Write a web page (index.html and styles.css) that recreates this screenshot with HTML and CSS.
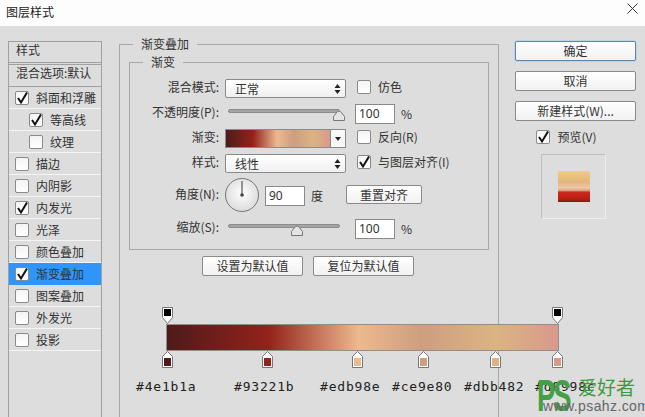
FILE: index.html
```html
<!DOCTYPE html>
<html lang="zh-CN">
<head>
	<meta charset="UTF-8">
	<title>图层样式</title>
	<link rel="stylesheet" href="styles.css">
</head>
<body>
	<svg class="defs" width="0" height="0">
		<symbol id="tick" viewBox="0 0 14 14"><path d="M3 7l3 4.500L12 1.500" fill="none" stroke="#111" stroke-width="2"/></symbol>
		<symbol id="stop-top" viewBox="0 0 11 17"><path d="M.5.5h10v10l-5 6-5-6z" fill="#fff" stroke="#777"/><rect x="2" y="2" width="7" height="7" fill="#000"/></symbol>
		<symbol id="stop-bottom" viewBox="0 0 11 17"><path d="M.5 16.500h10v-11l-5-5-5 5z" fill="#fff" stroke="#777"/><rect x="2" y="7" width="7" height="8" fill="currentColor"/></symbol>
		<symbol id="updown" viewBox="0 0 7 10"><path d="M3.500 0l3 4h-6zM3.500 10l3-4h-6z" fill="#222"/></symbol>
		<symbol id="thumb" viewBox="0 0 12 11"><path d="M.5 10.500v-4l4-5q1.500-1 3 0l4 5v4z" fill="#e4e4e4" stroke="#777"/></symbol>
	</svg>

	<div class="titlebar">
		<span>图层样式</span>
		<svg class="close" width="11" height="11" viewBox="0 0 11 11"><path d="M.5.5l10 10M10.500.5l-10 10" stroke="#333" fill="none"/></svg>
	</div>

	<div class="main">
		<div class="side">
			<div class="side-head">样式</div>
			<div class="side-blend">混合选项:默认</div>
			<div class="side-row"><span class="check"><svg><use href="#tick"/></svg></span>斜面和浮雕</div>
			<div class="side-row sub"><span class="check"><svg><use href="#tick"/></svg></span>等高线</div>
			<div class="side-row sub"><span class="check"></span>纹理</div>
			<div class="side-row"><span class="check"></span>描边</div>
			<div class="side-row"><span class="check"></span>内阴影</div>
			<div class="side-row"><span class="check"><svg><use href="#tick"/></svg></span>内发光</div>
			<div class="side-row"><span class="check"></span>光泽</div>
			<div class="side-row"><span class="check"></span>颜色叠加</div>
			<div class="side-row active"><span class="check"><svg><use href="#tick"/></svg></span>渐变叠加</div>
			<div class="side-row"><span class="check"></span>图案叠加</div>
			<div class="side-row"><span class="check"></span>外发光</div>
			<div class="side-row"><span class="check"></span>投影</div>
		</div>

		<fieldset class="outer">
			<legend>渐变叠加</legend>
			<fieldset class="inner">
				<legend>渐变</legend>
				<div class="form">
					<div class="row">
						<label>混合模式:</label>
						<div class="select">正常<svg class="updown"><use href="#updown"/></svg></div>
						<span class="opt"><span class="check"></span>仿色</span>
					</div>
					<div class="row">
						<label>不透明度(P):</label>
						<div class="slider"><svg class="thumb thumb-end"><use href="#thumb"/></svg></div>
						<div class="num">100</div><span class="unit">%</span>
					</div>
					<div class="row">
						<label>渐变:</label>
						<div class="grad-pick"><div class="grad-swatch"></div><div class="grad-arrow"></div></div>
						<span class="opt"><span class="check"></span>反向(R)</span>
					</div>
					<div class="row">
						<label>样式:</label>
						<div class="select">线性<svg class="updown"><use href="#updown"/></svg></div>
						<span class="opt"><span class="check"><svg><use href="#tick"/></svg></span>与图层对齐(I)</span>
					</div>
					<div class="row">
						<label>角度(N):</label>
						<svg class="dial" width="34" height="34" viewBox="0 0 34 34">
							<defs><radialGradient id="dialbg" cx=".5" cy=".45" r=".6"><stop offset="0" stop-color="#fff"/><stop offset="1" stop-color="#d8d8d8"/></radialGradient></defs>
							<circle cx="17" cy="17" r="16.500" fill="url(#dialbg)" stroke="#777"/>
							<path d="M17 3v14" stroke="#555" stroke-width="1.200"/>
							<circle cx="17" cy="17" r="1.800" fill="#444"/>
						</svg>
						<div class="num">90</div><span class="unit deg">度</span>
						<button class="btn btn-reset">重置对齐</button>
					</div>
					<div class="row">
						<label>缩放(S):</label>
						<div class="slider"><svg class="thumb thumb-mid"><use href="#thumb"/></svg></div>
						<div class="num">100</div><span class="unit">%</span>
					</div>
				</div>
			</fieldset>

			<div class="defaults">
				<button class="btn">设置为默认值</button>
				<button class="btn">复位为默认值</button>
			</div>

			<div class="bar-wrap">
				<svg class="stop-t left-end"><use href="#stop-top"/></svg>
				<svg class="stop-t right-end"><use href="#stop-top"/></svg>
				<div class="bar"></div>
				<svg class="stop-b" style="left:1px;color:#4e1b1a"><use href="#stop-bottom"/></svg>
				<svg class="stop-b" style="left:101px;color:#93221b"><use href="#stop-bottom"/></svg>
				<svg class="stop-b" style="left:191px;color:#edb98e"><use href="#stop-bottom"/></svg>
				<svg class="stop-b" style="left:257px;color:#ce9e80"><use href="#stop-bottom"/></svg>
				<svg class="stop-b" style="left:329px;color:#dbb482"><use href="#stop-bottom"/></svg>
				<svg class="stop-b" style="left:391px;color:#d8998c"><use href="#stop-bottom"/></svg>
				<span class="hex" style="left:1px">#4e1b1a</span>
				<span class="hex" style="left:99px">#93221b</span>
				<span class="hex" style="left:185px">#edb98e</span>
				<span class="hex" style="left:257px">#ce9e80</span>
				<span class="hex" style="left:329px">#dbb482</span>
				<span class="hex" style="left:400px">#d8998c</span>
			</div>
		</fieldset>

		<div class="actions">
			<button class="btn big primary">确定</button>
			<button class="btn big">取消</button>
			<button class="btn big">新建样式(W)...</button>
			<span class="opt preview-opt"><span class="check"><svg><use href="#tick"/></svg></span>预览(V)</span>
			<div class="preview"><div class="preview-swatch"></div></div>
		</div>
	</div>

	<div class="watermark">
		<span class="wm-ps">PS</span>
		<span class="wm-name">爱好者</span>
		<span class="wm-url">www.psahz.com</span>
	</div>
</body>
</html>
```

FILE: styles.css
```css
*{
	margin:0;
	padding:0;
	box-sizing:border-box;
}
html,body{
	height:100%;
	overflow:hidden;
}
body{
	position:relative;
	background:#dddddd;
	color:#333;
	font:12px/16px "Noto Sans CJK SC","Liberation Sans",sans-serif;
}
.defs{
	position:absolute;
}
.titlebar{
	height:26px;
	background:#fdfdfd;
	padding:3px 0 0 6px;
	font-size:12px;
	line-height:18px;
	color:#222;
	display:flex;
	justify-content:space-between;
}
.close{
	margin:0 7px 0 0;
}
.main{
	display:flex;
	align-items:flex-start;
	height:391px;
	padding:15px 0 0 8px;
}

/* left list */
.side{
	width:94px;
	height:376px;
	border:1px solid #a0a0a0;
	border-bottom:0;
	flex:none;
}
.side-head{
	height:23px;
	padding:0 0 0 7px;
	border-bottom:3px double #a0a0a0;
}
.side-blend{
	height:22px;
	padding:0 0 0 7px;
	border-bottom:1px solid #a0a0a0;
}
.side-row{
	height:22px;
	display:flex;
	align-items:center;
	padding-left:6px;
	gap:7px;
	border-bottom:1px solid #f5f5f5;
}
.side-row.sub{
	padding-left:20px;
}
.side-row.active{
	background:#2f95fb;
	border-bottom-color:#2f95fb;
}
.check{
	width:14px;
	height:14px;
	flex:none;
	border:1px solid #8a8a8a;
	border-radius:2px;
	background:linear-gradient(#f4f4f4,#fff);
	display:inline-block;
}
.check svg{
	display:block;
	width:14px;
	height:14px;
	margin:-1px 0 0 -1px;
}

/* middle */
.outer{
	width:380px;
	height:400px;
	margin:-4px 0 0 17px;
	border:0;
	border-left:1px solid #a8a8a8;
	border-right:1px solid #a8a8a8;
	border-top:1px solid #a8a8a8;
	padding:0 9px;
	flex:none;
	position:relative;
}
.outer > legend{
	margin-left:4px;
	padding:0 8px;
	line-height:14px;
}
.inner{
	width:360px;
	height:195px;
	margin-top:4px;
	border:1px solid #a8a8a8;
	padding:0;
}
.inner > legend{
	margin-left:13px;
	padding:0 8px;
	line-height:14px;
}
.form{
	display:grid;
	grid-template-rows:repeat(3,25px) 32px 33px 20px;
	padding-top:10px;
}
.row{
	display:flex;
	align-items:flex-start;
	height:20px;
}
.row label{
	width:89px;
	text-align:right;
	margin-right:6px;
	flex:none;
	white-space:nowrap;
}
.select{
	width:121px;
	height:19px;
	border:1px solid #8a8a8a;
	border-radius:2px;
	background:linear-gradient(#fff,#f0f0f0);
	padding-left:9px;
	line-height:17px;
	position:relative;
	flex:none;
}
.updown{
	position:absolute;
	right:4px;
	top:4px;
	width:7px;
	height:10px;
}
.opt{
	display:inline-flex;
	align-items:center;
	gap:7px;
	margin-left:11px;
	white-space:nowrap;
}
.slider{
	width:112px;
	height:4px;
	margin:5px 15px 0 3px;
	background:#a4a4a4;
	border:1px solid #8c8c8c;
	border-radius:2px;
	position:relative;
	flex:none;
}
.thumb{
	position:absolute;
	top:0;
	width:12px;
	height:11px;
}
.thumb-end{
	right:-6px;
}
.thumb-mid{
	left:62px;
}
.num{
	width:40px;
	height:20px;
	border:1px solid #8a8a8a;
	background:#fff;
	padding-left:3px;
	line-height:18px;
	font-family:"Noto Sans","Liberation Sans",sans-serif;
	flex:none;
}
.unit{
	margin-left:6px;
	line-height:20px;
}
.grad-pick{
	width:121px;
	height:19px;
	border:1px solid #8a8a8a;
	display:flex;
	flex:none;
}
.grad-swatch{
	flex:1;
	background:linear-gradient(90deg,#4e1b1a 0,#93221b 26%,#edb98e 49%,#ce9e80 65%,#dbb482 84%,#d8998c 100%);
	border-right:1px solid #8a8a8a;
}
.grad-arrow{
	width:14px;
	background:#f8f8f8;
	position:relative;
}
.grad-arrow::after{
	content:"";
	position:absolute;
	left:4px;
	top:7px;
	border:3px solid transparent;
	border-top:4px solid #222;
	border-bottom:0;
}
.dial{
	margin:-8px 6px 0 0;
	flex:none;
}
.deg{
	margin-left:6px;
}
.btn{
	font:12px/16px "Noto Sans CJK SC","Liberation Sans",sans-serif;
	color:#333;
	border:1px solid #8a8a8a;
	border-radius:2px;
	background:linear-gradient(#fff,#f1f1f1);
	white-space:nowrap;
}
.btn-reset{
	width:76px;
	height:19px;
	margin:-1px 0 0 23px;
}
.defaults{
	display:flex;
	gap:10px;
	margin:6px 0 0 73px;
}
.defaults .btn{
	width:101px;
	height:20px;
}

/* gradient bar */
.bar-wrap{
	position:absolute;
	left:46px;
	top:256px;
	width:393px;
}
.bar{
	height:27px;
	margin-top:17px;
	border:1px solid #8f8f8f;
	background:linear-gradient(90deg,#4e1b1a 0,#93221b 26%,#edb98e 49%,#ce9e80 65%,#dbb482 84%,#d8998c 100%);
}
.stop-t,.stop-b{
	position:absolute;
	width:11px;
	height:17px;
	overflow:visible;
}
.stop-t{
	top:0;
}
.left-end{
	left:-4px;
}
.right-end{
	left:386px;
}
.stop-b{
	top:44px;
	margin-left:-5px;
}
.hex{
	position:absolute;
	top:71px;
	margin-left:-31px;
	font:13px/18px "DejaVu Sans Mono",monospace;
	letter-spacing:.8px;
	color:#222;
	white-space:nowrap;
}

/* right column */
.actions{
	width:121px;
	margin-left:16px;
	flex:none;
	display:flex;
	flex-direction:column;
	align-items:center;
}
.btn.big{
	width:121px;
	height:20px;
	margin-bottom:10px;
}
.btn.primary{
	border-color:#5d87ad;
	box-shadow:0 0 0 1px #bcd2e6;
}
.preview-opt{
	margin:-2px 0 0 -18px;
	gap:7px;
	height:16px;
}
.preview{
	width:65px;
	height:65px;
	margin:9px 0 0 -4px;
	border:1px solid #bfbfbf;
	border-right-color:#eee;
	border-bottom-color:#eee;
	display:flex;
	align-items:center;
	justify-content:center;
}
.preview-swatch{
	width:32px;
	height:31px;
	background:linear-gradient(#f0cf78 0,#e3b580 35%,#ecc8a8 55%,#d9a080 63%,#cf2a1c 68%,#b81f14 90%,#7d1a12 100%);
}

/* watermark */
.watermark{
	position:absolute;
	left:535px;
	top:372px;
	width:110px;
	height:45px;
}
.wm-ps{
	position:absolute;
	left:2px;
	top:2px;
	font:bold 44px/44px "Liberation Sans",sans-serif;
	letter-spacing:-3px;
	color:#45a045;
	transform:scaleX(.62);
	transform-origin:0 0;
}
.wm-name{
	position:absolute;
	left:43px;
	top:3px;
	font:19px/24px "Noto Sans CJK SC",sans-serif;
	color:#3c9a3e;
}
.wm-url{
	position:absolute;
	left:8px;
	top:26px;
	font:14px/16px "Liberation Sans",sans-serif;
	letter-spacing:.4px;
	color:#666;
}
```
